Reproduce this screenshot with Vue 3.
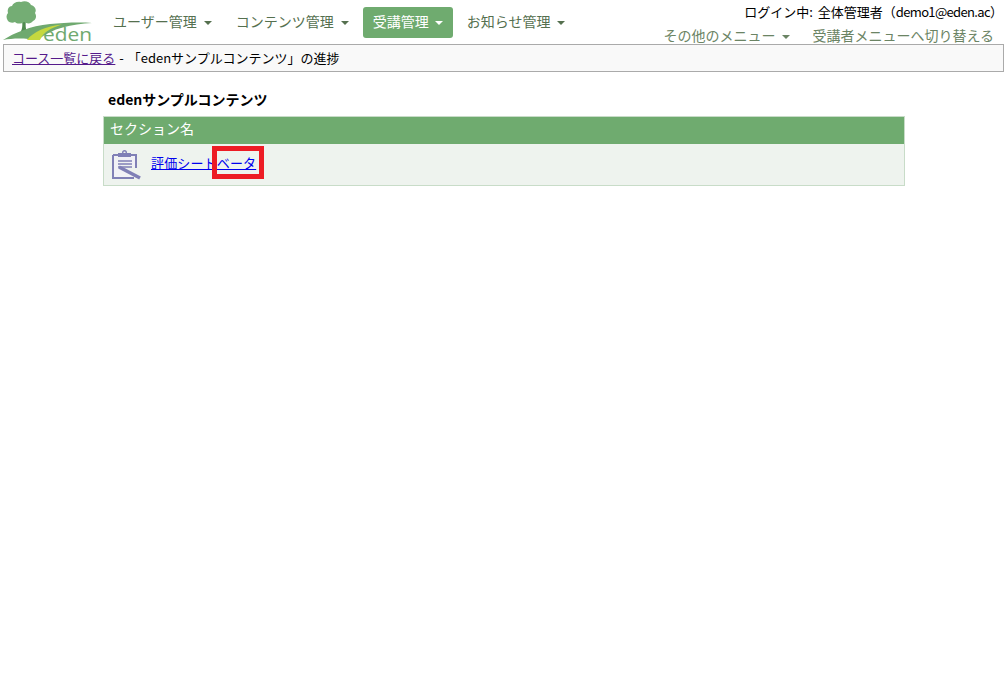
<script setup>
const menus = [
  { label: 'ユーザー管理' },
  { label: 'コンテンツ管理' },
  { label: '受講管理', active: true },
  { label: 'お知らせ管理' }
]
</script>

<template>
  <div class="page">
    <header class="header">
      <a class="logo" href="#">
        <svg width="95" height="44" viewBox="0 0 95 44">
          <path d="M22 20 C23 27 22 32 17 37 L29 35 C26 31 25 27 26 20 Z" fill="#4f8a4f" />
          <path d="M8 21 C6 18 6 15 8 13 C7 9 9 6 12 6 C13 3 17 1 21 2 C25 0 30 2 31 5 C35 6 37 10 35 13 C37 16 36 20 33 21 C31 24 27 24 24 22 C21 24 17 24 15 22 C13 23 10 23 8 21 Z" fill="#74ad74" />
          <path d="M3 40 C14 33 30 26 50 24 C62 23 78 22 92 23 C72 24 52 28 38 40 C25 38 13 38 3 40 Z" fill="#6fa96f" />
          <path d="M27 40 C33 32 46 26 62 24.500 C50 28 43 33 40 40 Z" fill="#c5d83f" />
          <text x="43" y="40.500" textLength="49" lengthAdjust="spacingAndGlyphs" class="logo-text">eden</text>
        </svg>
      </a>
      <nav class="menu">
        <a v-for="m in menus" :key="m.label" href="#" class="menu-item" :class="{ active: m.active }">
          {{ m.label }}<span class="caret"></span>
        </a>
      </nav>
      <div class="user">
        <div class="login">ログイン中: 全体管理者（<span class="mail">demo1@eden.ac</span>）</div>
        <div class="user-links">
          <a href="#" class="user-link">その他のメニュー<span class="caret"></span></a>
          <a href="#" class="user-link">受講者メニューへ切り替える</a>
        </div>
      </div>
    </header>

    <div class="crumbs">
      <a href="#" class="back">コース一覧に戻る</a> - 「edenサンプルコンテンツ」の進捗
    </div>

    <main class="content">
      <h1 class="title">edenサンプルコンテンツ</h1>
      <div class="section">
        <div class="section-head">セクション名</div>
        <div class="section-row">
          <svg class="sheet-icon" width="30" height="30" viewBox="0 0 30 30">
            <path d="M1 5 H24 V18 M22 28 H1 V5" fill="#f1f1f6" stroke="#8080b6" stroke-width="2" />
            <rect x="6" y="3" width="13" height="4" fill="#8080b6" />
            <circle cx="12.500" cy="2.500" r="1.800" fill="none" stroke="#8080b6" stroke-width="1.400" />
            <path d="M6 11 H20 M6 14 H20 M6 17 H20" stroke="#8080b6" stroke-width="1.300" />
            <path d="M7 17 L28 28" stroke="#8080b6" stroke-width="3.500" />
          </svg>
          <span class="links">
            <a href="#" class="sheet-link">評価シートベータ</a>
            <span class="highlight"></span>
          </span>
        </div>
      </div>
    </main>
  </div>
</template>

<style scoped>
.page {
  font-family: "Noto Sans CJK JP", "Liberation Sans", sans-serif;
  font-size: 13px;
  color: #000;
}
.header {
  display: flex;
  height: 44px;
}
.logo {
  display: block;
  width: 103px;
  flex: none;
}
.logo-text {
  font-family: "Open Sans", "Liberation Sans", sans-serif;
  font-size: 18px;
  fill: #6fa96f;
}
.menu {
  display: flex;
  gap: 4px;
  padding-top: 7px;
  align-items: flex-start;
}
.menu-item {
  display: block;
  height: 31px;
  line-height: 29px;
  padding: 0 10px;
  border-radius: 3px;
  font-size: 14px;
  color: #55704f;
  text-decoration: none;
  white-space: nowrap;
}
.menu-item.active {
  background: #6fab6f;
  color: #fff;
}
.caret {
  display: inline-block;
  margin-left: 7px;
  vertical-align: middle;
  border-top: 4px solid currentColor;
  border-left: 4px solid transparent;
  border-right: 4px solid transparent;
}
.menu-item.active .caret {
  margin-left: 6px;
}
.user {
  margin-left: auto;
  padding-right: 5px;
  text-align: right;
}
.login {
  height: 24px;
  line-height: 23px;
  word-spacing: 2px;
  white-space: nowrap;
}
.mail {
  letter-spacing: -0.65px;
}
.user-links {
  display: flex;
  justify-content: flex-end;
  gap: 22px;
  padding-right: 9px;
  line-height: 22px;
}
.user-link {
  font-size: 14px;
  color: #6b8464;
  text-decoration: none;
  white-space: nowrap;
}
.crumbs {
  box-sizing: border-box;
  height: 28px;
  margin: 0 4px 0 3px;
  padding: 0 8px;
  line-height: 26px;
  word-spacing: 1px;
  background: #f9f9f9;
  border: 1px solid #aaa;
}
.back {
  color: #551a8b;
}
.content {
  width: 802px;
  margin: 0 0 0 103px;
}
.title {
  margin: 0;
  padding: 17px 0 0 5px;
  font-size: 14px;
  line-height: 21px;
  font-weight: 700;
  height: 44px;
  box-sizing: border-box;
}
.section {
  border: 1px solid #c8dcc8;
}
.section-head {
  height: 27px;
  line-height: 23px;
  padding-left: 6px;
  background: #6fab6f;
  color: #fff;
  font-size: 14px;
}
.section-row {
  display: flex;
  align-items: center;
  height: 41px;
  padding-left: 8px;
  background: #eef3ee;
}
.sheet-icon {
  flex: none;
  margin-right: 9px;
}
.links {
  position: relative;
  top: -2px;
  line-height: 18px;
}
.sheet-link {
  color: #0000ee;
  letter-spacing: 0.15px;
}
.highlight {
  position: absolute;
  left: 61px;
  top: -8px;
  width: 52px;
  height: 33px;
  box-sizing: border-box;
  border: 5px solid #ed1c24;
}
</style>

<style>
html, body {
  background: #fff;
}
</style>
